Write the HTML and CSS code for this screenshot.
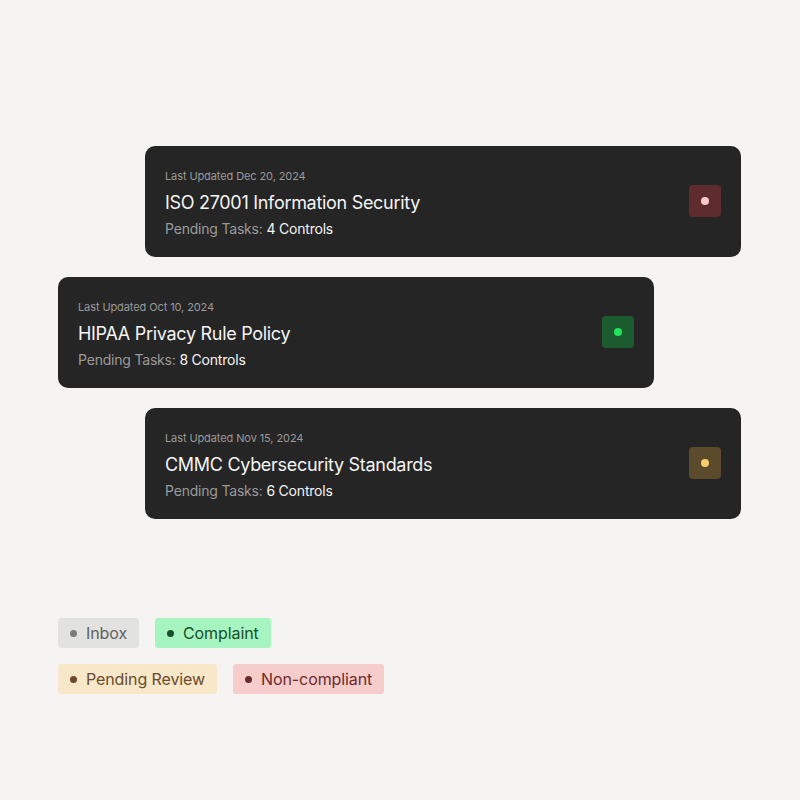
FILE: index.html
```html
<!DOCTYPE html>
<html lang="en">
<head>
    <meta charset="UTF-8">
    <meta name="viewport" content="width=device-width, initial-scale=1.0">
    <title>Compliance Frameworks</title>
    <link rel="stylesheet" href="styles.css">
</head>
<body>
    <div class="cards">
        <div class="card shift">
            <div class="info">
                <div class="updated">Last Updated Dec 20, 2024</div>
                <div class="title">ISO 27001 Information Security</div>
                <div class="pending">Pending Tasks: <span>4 Controls</span></div>
            </div>
            <div class="status red"><i></i></div>
        </div>
        <div class="card">
            <div class="info">
                <div class="updated">Last Updated Oct 10, 2024</div>
                <div class="title">HIPAA Privacy Rule Policy</div>
                <div class="pending">Pending Tasks: <span>8 Controls</span></div>
            </div>
            <div class="status green"><i></i></div>
        </div>
        <div class="card shift">
            <div class="info">
                <div class="updated">Last Updated Nov 15, 2024</div>
                <div class="title">CMMC Cybersecurity Standards</div>
                <div class="pending">Pending Tasks: <span>6 Controls</span></div>
            </div>
            <div class="status yellow"><i></i></div>
        </div>
    </div>

    <div class="tags">
        <div class="tag-row">
            <div class="tag inbox"><i></i>Inbox</div>
            <div class="tag complaint"><i></i>Complaint</div>
        </div>
        <div class="tag-row">
            <div class="tag review"><i></i>Pending Review</div>
            <div class="tag non"><i></i>Non-compliant</div>
        </div>
    </div>
</body>
</html>
```

FILE: styles.css
```css
*{
    box-sizing: border-box;
}
body{
    margin: 0;
    padding: 146px 0 0 58px;
    background-color: #f5f4f2;
    font-family: Inter, "Noto Sans", sans-serif;
}
.cards{
    display: flex;
    flex-direction: column;
    gap: 20px;
}
.card{
    width: 596px;
    height: 111px;
    background-color: #252525;
    border-radius: 10px;
    padding: 23px 20px 0;
    display: flex;
    align-items: flex-start;
    justify-content: space-between;
}
.shift{
    margin-left: 87px;
}
.updated{
    font-size: 11px;
    line-height: 14px;
    color: #9a9a9a;
    letter-spacing: -0.1px;
}
.title{
    font-size: 18px;
    line-height: 22px;
    color: #f4f4f4;
    margin-top: 9px;
    letter-spacing: -0.3px;
}
.pending{
    font-size: 14px;
    line-height: 17px;
    color: #9a9a9a;
    margin-top: 6px;
    letter-spacing: -0.2px;
}
.pending span{
    color: #f4f4f4;
}
.status{
    width: 32px;
    height: 32px;
    margin-top: 16px;
    border-radius: 4px;
    display: flex;
    align-items: center;
    justify-content: center;
}
.status i{
    width: 8px;
    height: 8px;
    border-radius: 50%;
}
.red{
    background-color: #5e2c2c;
}
.red i{
    background-color: #f8cbc7;
}
.green{
    background-color: #1c5a30;
}
.green i{
    background-color: #21e45a;
}
.yellow{
    background-color: #5c4a2c;
}
.yellow i{
    background-color: #f9cd6b;
}
.tags{
    margin-top: 99px;
    display: flex;
    flex-direction: column;
    gap: 16px;
}
.tag-row{
    display: flex;
    gap: 16px;
}
.tag{
    height: 30px;
    padding: 0 12px 0 12px;
    border-radius: 3px;
    display: flex;
    align-items: center;
    gap: 9px;
    font-size: 16px;
    letter-spacing: -0.1px;
}
.tag i{
    width: 7px;
    height: 7px;
    border-radius: 50%;
    background-color: currentColor;
}
.inbox{
    background-color: #e2e2e0;
    color: #616161;
}
.inbox i{
    background-color: #7a7a7a;
}
.complaint{
    background-color: #a6f5c0;
    color: #1b4d2b;
}
.review{
    background-color: #f8e8c9;
    color: #6a4a2b;
}
.non{
    background-color: #f6cdcb;
    color: #6b2b2b;
}
```
